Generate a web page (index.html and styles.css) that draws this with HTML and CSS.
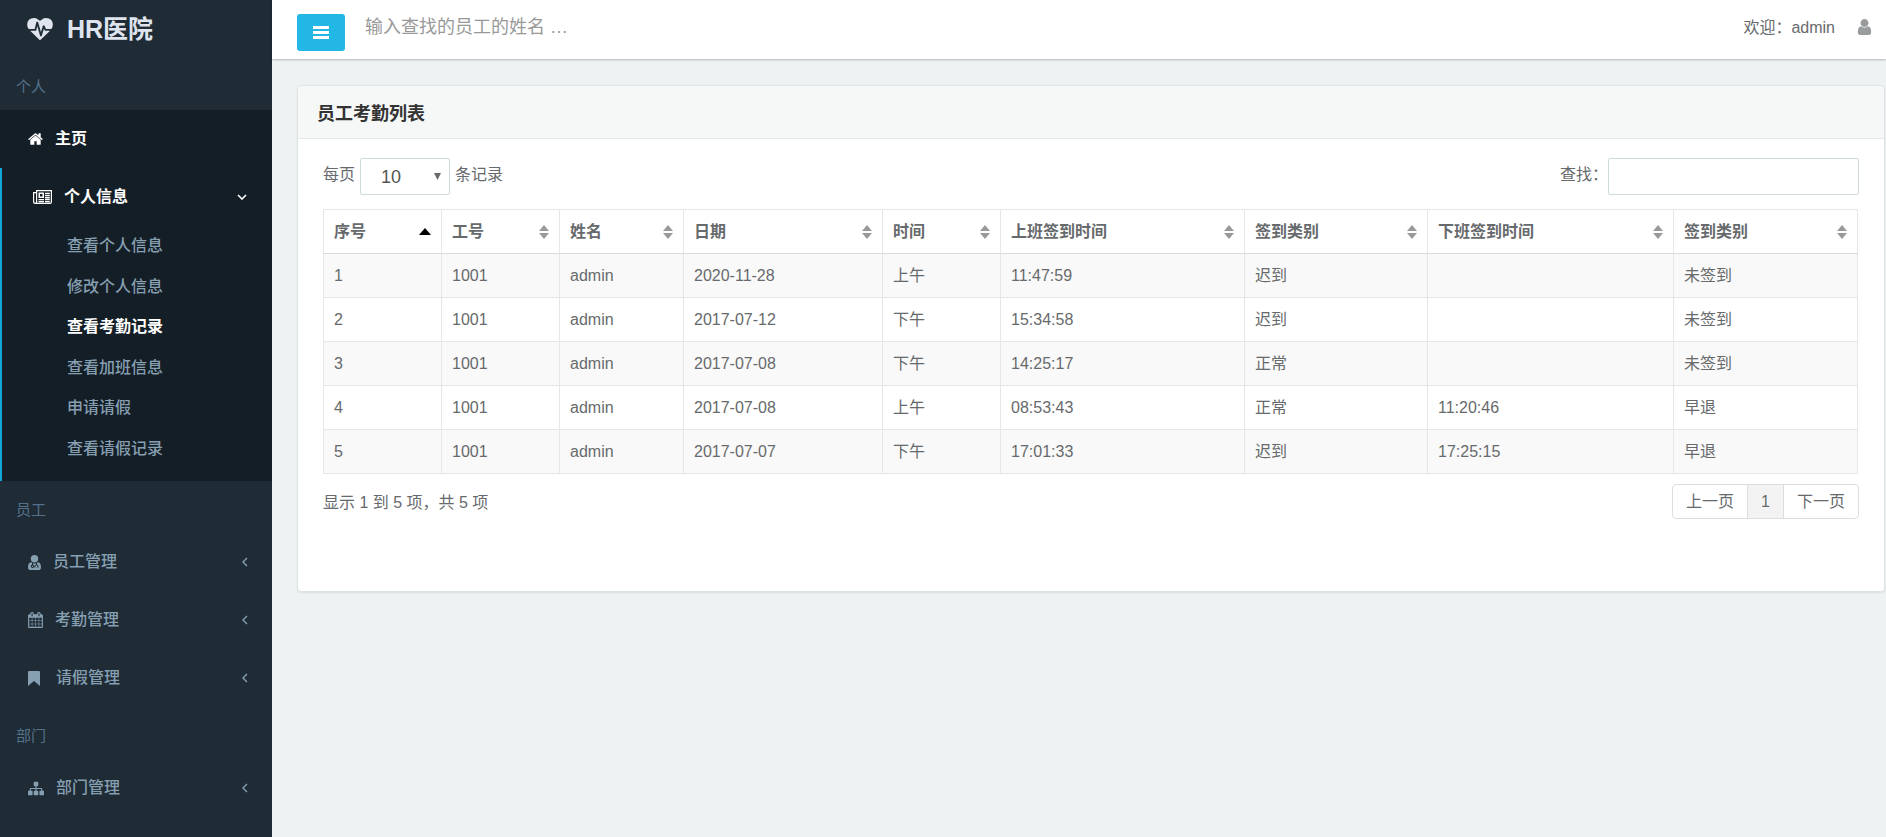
FILE: index.html
```html
<!DOCTYPE html>
<html lang="zh-CN">
<head>
<meta charset="utf-8">
<title>HR医院</title>
<link rel="stylesheet" href="styles.css">
</head>
<body>
<svg class="sprite" aria-hidden="true">
  <symbol id="sort" viewBox="0 0 10 14"><path d="M5 0l5 6H0zM0 8h10l-5 6z"/></symbol>
  <symbol id="left" viewBox="0 0 6 10"><path d="M5 1L1 5l4 4" fill="none" stroke="currentColor" stroke-width="1.4"/></symbol>
</svg>
<div class="app">
  <aside class="sidebar">
    <a class="brand" href="#">
      <svg class="brand-icon" viewBox="0 0 1792 1536"><path d="M1280 896h305q-5 6-10 10.500t-9 7.500l-3 4-623 600q-18 18-44 18t-44-18l-624-602q-5-2-21-20h369q22 0 39.500-13.500t22.500-34.500l70-281 190 667q6 20 23 33t39 13q21 0 38-13t23-33l146-485 56 112q18 35 57 35zm512-428q0 145-103 300h-369l-111-221q-8-17-25.500-27t-36.500-8q-45 5-56 46l-129 430-196-686q-6-20-23.500-33t-39.500-13-39 13.500-22 34.500l-116 464h-423q-103-155-103-300 0-220 127-344t351-124q62 0 126.500 21.500t120 58 95.500 68.500 76 68q36-36 76-68t95.500-68.500 120-58 126.500-21.500q224 0 351 124t127 344z"/></svg>
      <span>HR医院</span>
    </a>
    <nav>
      <h2 class="section">个人</h2>
      <a class="item current" href="#">
        <svg class="i15" viewBox="64 190 1664 1400"><path d="M1472 992v480q0 26-19 45t-45 19h-384v-384h-256v384h-384q-26 0-45-19t-19-45v-480q0-1 .5-3t.5-3l575-474 575 474q1 2 1 6zm223-69l-62 74q-8 9-21 11h-3q-13 0-21-7l-692-577-692 577q-12 8-24 7-13-2-21-11l-62-74q-8-10-7-23.500t11-21.500l719-599q32-26 76-26t76 26l244 204v-195q0-14 9-23t23-9h192q14 0 23 9t9 23v408l219 182q10 8 11 21.500t-7 23.500z"/></svg>
        <span>主页</span>
      </a>
      <div class="group">
        <a class="item current" href="#">
          <svg class="i19" viewBox="0 0 19 14"><path fill-rule="evenodd" d="M3 0h16v12q0 2-2 2H2q-2 0-2-2V2h3zM4.200 1.200V12q0 .5-.2.800h13q.8 0 .8-.8V1.200zM1.200 3.200V12q0 .8.900.8T3 12V3.200zM5.500 2.500h5.500v5.500H5.500zM7 4v2.500h2.500V4zM12 2.800h4.800v1.400H12zM12 4.900h4.800v1.400H12zM12 7h4.800v1.400H12zM5.500 9.100h5.500v1.200H5.500zM12 9.100h4.800v1.200H12zM5.500 11h5.500v1.200H5.500zM12 11h4.800v1.200H12z"/></svg>
          <span>个人信息</span>
          <svg class="down" viewBox="0 0 10 6"><path d="M1 1l4 4 4-4" fill="none" stroke="currentColor" stroke-width="1.600"/></svg>
        </a>
        <ul class="sub">
          <li><a href="#">查看个人信息</a></li>
          <li><a href="#">修改个人信息</a></li>
          <li><a class="active" href="#">查看考勤记录</a></li>
          <li><a href="#">查看加班信息</a></li>
          <li><a href="#">申请请假</a></li>
          <li><a href="#">查看请假记录</a></li>
        </ul>
      </div>
      <h2 class="section">员工</h2>
      <a class="item" href="#">
        <svg class="i13" viewBox="0 0 13 15"><path fill-rule="evenodd" d="M6.500 0a3.700 3.700 0 1 1 0 7.400 3.700 3.700 0 0 1 0-7.400zM3 7.200l1 .5v2.100a1.600 1.600 0 1 0 1 0V8.200q1.500.6 3 0v1.200q-1.500.3-1.500 2v1.400h1v-1.400q0-1.100 1-1.100t1 1.100v1.400h1v-1.400q0-1.700-1.500-2V7.700l1-.5q3 .6 3 5 0 2.800-2.500 2.800h-8Q0 15 0 12.200q0-4.400 3-5zM4.500 10.700a.7.7 0 1 1 0 1.400.7.7 0 0 1 0-1.400z"/></svg>
        <span>员工管理</span>
        <svg class="left"><use href="#left"/></svg>
      </a>
      <a class="item" href="#">
        <svg class="i15" viewBox="64 0 1664 1792"><path d="M192 1664h288v-288h-288v288zm352 0h320v-288h-320v288zm-352-352h288v-320h-288v320zm352 0h320v-320h-320v320zm-352-384h288v-288h-288v288zm736 736h320v-288h-320v288zm-384-736h320v-288h-320v288zm768 736h288v-288h-288v288zm-384-352h320v-320h-320v320zm-352-864v-288q0-13-9.500-22.500t-22.500-9.500h-64q-13 0-22.500 9.500t-9.500 22.500v288q0 13 9.500 22.500t22.500 9.500h64q13 0 22.500-9.500t9.500-22.500zm736 864h288v-320h-288v320zm-384-384h320v-288h-320v288zm384 0h288v-288h-288v288zm32-480v-288q0-13-9.500-22.500t-22.500-9.500h-64q-13 0-22.500 9.500t-9.500 22.500v288q0 13 9.500 22.500t22.500 9.500h64q13 0 22.500-9.500t9.500-22.500zm384-64v1280q0 52-38 90t-90 38h-1408q-52 0-90-38t-38-90v-1280q0-52 38-90t90-38h128v-96q0-66 47-113t113-47h64q66 0 113 47t47 113v96h384v-96q0-66 47-113t113-47h64q66 0 113 47t47 113v96h128q52 0 90 38t38 90z"/></svg>
        <span>考勤管理</span>
        <svg class="left"><use href="#left"/></svg>
      </a>
      <a class="item" href="#">
        <svg class="i16" viewBox="0 0 16 15"><path d="M1 0h10q1 0 1 1v14l-6-5-6 5V1q0-1 1-1z"/></svg>
        <span>请假管理</span>
        <svg class="left"><use href="#left"/></svg>
      </a>
      <h2 class="section">部门</h2>
      <a class="item" href="#">
        <svg class="i16" viewBox="0 128 1792 1536"><path d="M1792 1248v320q0 40-28 68t-68 28h-320q-40 0-68-28t-28-68v-320q0-40 28-68t68-28h96v-192h-512v192h96q40 0 68 28t28 68v320q0 40-28 68t-68 28h-320q-40 0-68-28t-28-68v-320q0-40 28-68t68-28h96v-192h-512v192h96q40 0 68 28t28 68v320q0 40-28 68t-68 28h-320q-40 0-68-28t-28-68v-320q0-40 28-68t68-28h96v-192q0-52 38-90t90-38h512v-192h-96q-40 0-68-28t-28-68v-320q0-40 28-68t68-28h320q40 0 68 28t28 68v320q0 40-28 68t-68 28h-96v192h512q52 0 90 38t38 90v192h96q40 0 68 28t28 68z"/></svg>
        <span>部门管理</span>
        <svg class="left"><use href="#left"/></svg>
      </a>
    </nav>
  </aside>

  <div class="content">
    <header class="topbar">
      <button class="toggle" type="button" aria-label="菜单"><svg viewBox="0 0 16 13"><path d="M0 0h16v3H0zM0 5h16v3H0zM0 10h16v3H0z"/></svg></button>
      <input class="top-search" type="text" aria-label="查找员工" placeholder="输入查找的员工的姓名 …">
      <span class="welcome">欢迎：admin</span>
      <a class="user" href="#" aria-label="用户"><svg viewBox="256 128 1280 1536"><path d="M1536 1399q0 109-62.500 187t-150.500 78h-854q-88 0-150.500-78t-62.500-187q0-85 8.500-160.500t31.500-152 58.500-131 94-89 134.500-34.500q131 128 313 128t313-128q76 0 134.500 34.500t94 89 58.500 131 31.500 152 8.500 160.500zm-256-887q0 159-112.500 271.500t-271.500 112.500-271.500-112.500-112.500-271.500 112.500-271.500 271.500-112.500 271.500 112.500 112.500 271.500z"/></svg></a>
    </header>
    <main>
      <section class="panel">
        <h1 class="panel-title">员工考勤列表</h1>
        <div class="panel-body">
          <div class="tools">
            <label class="length">每页
              <span class="select-wrap">
                <select><option>10</option><option>25</option><option>50</option></select>
                <svg viewBox="0 0 7 7"><path d="M0 0h7L3.500 7z"/></svg>
              </span>
              条记录</label>
            <label class="filter">查找：<input type="search"></label>
          </div>
          <table>
            <colgroup><col class="c118"><col class="c118"><col class="c124"><col class="c199"><col class="c118"><col class="c244"><col class="c183"><col class="c246"><col class="c184"></colgroup>
            <thead>
              <tr>
                <th><button type="button">序号<svg class="asc" viewBox="0 0 12 7"><path d="M6 0l6 7H0z"/></svg></button></th>
                <th><button type="button">工号<svg><use href="#sort"/></svg></button></th>
                <th><button type="button">姓名<svg><use href="#sort"/></svg></button></th>
                <th><button type="button">日期<svg><use href="#sort"/></svg></button></th>
                <th><button type="button">时间<svg><use href="#sort"/></svg></button></th>
                <th><button type="button">上班签到时间<svg><use href="#sort"/></svg></button></th>
                <th><button type="button">签到类别<svg><use href="#sort"/></svg></button></th>
                <th><button type="button">下班签到时间<svg><use href="#sort"/></svg></button></th>
                <th><button type="button">签到类别<svg><use href="#sort"/></svg></button></th>
              </tr>
            </thead>
            <tbody>
              <tr><td>1</td><td>1001</td><td>admin</td><td>2020-11-28</td><td>上午</td><td>11:47:59</td><td>迟到</td><td></td><td>未签到</td></tr>
              <tr><td>2</td><td>1001</td><td>admin</td><td>2017-07-12</td><td>下午</td><td>15:34:58</td><td>迟到</td><td></td><td>未签到</td></tr>
              <tr><td>3</td><td>1001</td><td>admin</td><td>2017-07-08</td><td>下午</td><td>14:25:17</td><td>正常</td><td></td><td>未签到</td></tr>
              <tr><td>4</td><td>1001</td><td>admin</td><td>2017-07-08</td><td>上午</td><td>08:53:43</td><td>正常</td><td>11:20:46</td><td>早退</td></tr>
              <tr><td>5</td><td>1001</td><td>admin</td><td>2017-07-07</td><td>下午</td><td>17:01:33</td><td>迟到</td><td>17:25:15</td><td>早退</td></tr>
            </tbody>
          </table>
          <div class="foot">
            <span>显示 1 到 5 项，共 5 项</span>
            <nav class="pager"><a href="#">上一页</a><a class="on" href="#">1</a><a href="#">下一页</a></nav>
          </div>
        </div>
      </section>
    </main>
  </div>
</div>
</body>
</html>
```
FILE: styles.css
```css
* { box-sizing: border-box; }

body {
  margin: 0;
  background: #eef2f3;
  color: #676a6c;
  font: 16px/24px "Liberation Sans", "Noto Sans CJK SC", sans-serif;
}

a { color: inherit; text-decoration: none; }
svg { fill: currentColor; flex: none; }
button, input, select { font: inherit; color: inherit; }
.sprite { display: none; }

.app { display: flex; min-height: 100vh; }

/* Sidebar */
.sidebar {
  flex: none;
  width: 272px;
  background: #1f2b35;
  color: #869fb1;
}
.brand {
  display: flex;
  align-items: center;
  gap: 14px;
  height: 58px;
  padding-left: 27px;
  color: #dfe4ee;
  font-size: 25px;
  font-weight: 700;
}
.brand-icon { width: 26px; height: 22px; }
.section {
  height: 52px;
  margin: 0;
  padding-left: 16px;
  color: #54728c;
  font-size: 15px;
  font-weight: 400;
  line-height: 58px;
}
.item {
  display: flex;
  align-items: center;
  height: 58px;
  padding: 0 24px 0 28px;
  font-weight: 500;
}
.item span { flex: 1; margin-left: 12px; }
.item.current { background: #141e26; color: #fff; font-weight: 700; }
.i13 { width: 13px; height: 15px; }
.i15 { width: 15px; height: 16px; }
.i16 { width: 16px; height: 15px; }
.i19 { width: 19px; height: 14px; }
.left { width: 6px; height: 10px; }
.down { width: 10px; height: 6px; }
.group {
  border-left: 2px solid #12a5da;
  background: #141e26;
}
.group .item { padding: 0 25px 0 31px; }
.sub {
  display: grid;
  grid-auto-rows: 1fr;
  align-items: center;
  height: 255px;
  margin: 0;
  padding: 0 0 12px 65px;
  list-style: none;
}
.sub a { display: block; font-weight: 500; }
.sub .active { color: #fff; font-weight: 700; }

/* Top bar */
.content { flex: 1; min-width: 0; }
.topbar {
  display: flex;
  align-items: center;
  height: 59px;
  padding: 0 14px 0 25px;
  background: #fff;
  box-shadow: 0 1px 2px rgba(0, 0, 0, 0.25);
}
.toggle {
  display: flex;
  align-items: center;
  justify-content: center;
  width: 48px;
  height: 37px;
  margin-top: 6px;
  border: 0;
  border-radius: 3px;
  background: #23b7e5;
  color: #fff;
}
.toggle svg { width: 16px; height: 13px; }
.top-search {
  flex: 1;
  height: 54px;
  margin-bottom: 5px;
  padding: 0 20px;
  border: 0;
  outline: 0;
  background: none;
  font-size: 18px;
}
.top-search::placeholder { color: #999; }
.welcome { margin-bottom: 3px; }
.user {
  display: flex;
  margin: 0 0 5px 22px;
  color: #999c9e;
}
.user svg { width: 15px; height: 16px; }

/* Panel */
main { padding: 26px 1px 0 25px; }
.panel {
  border: 1px solid #dee5e7;
  border-radius: 4px;
  background: #fff;
  box-shadow: 0 1px 2px rgba(0, 0, 0, 0.08);
}
.panel-title {
  margin: 0;
  padding: 16px 19px 11px;
  border-bottom: 1px solid #e4eaec;
  border-radius: 4px 4px 0 0;
  background: #f6f8f8;
  color: #333;
  font-size: 18px;
  font-weight: 700;
  line-height: 25px;
}
.panel-body { padding: 19px 25px 70px; }
.tools { display: flex; justify-content: space-between; }
.tools label { display: flex; line-height: 34px; }
.length { gap: 5px; }
.select-wrap { position: relative; width: 90px; }
.select-wrap svg {
  position: absolute;
  top: 15px;
  right: 9px;
  width: 7px;
  height: 7px;
  pointer-events: none;
}
.tools select, .tools input {
  display: block;
  height: 37px;
  border: 1px solid #cfdadd;
  border-radius: 2px;
  background: #fff;
}
.tools select {
  width: 100%;
  padding: 0 20px;
  appearance: none;
  color: #555;
  font-size: 18px;
}
.tools input { width: 251px; padding: 0 10px; }

table {
  width: calc(100% - 2px);
  margin-top: 14px;
  border-collapse: collapse;
  table-layout: fixed;
}
.c118 { width: 118px; }
.c124 { width: 124px; }
.c183 { width: 183px; }
.c184 { width: 184px; }
.c199 { width: 199px; }
.c244 { width: 244px; }
.c246 { width: 246px; }
th, td {
  height: 44px;
  padding: 0 10px;
  border: 1px solid #e4e6e7;
  text-align: left;
}
th { border-bottom-color: #d8dbdc; }
th button {
  display: flex;
  align-items: center;
  justify-content: space-between;
  width: 100%;
  padding: 0;
  border: 0;
  background: none;
  font-weight: 700;
}
th svg { width: 10px; height: 14px; color: #999; }
th .asc { width: 12px; height: 7px; color: #000; }
tbody tr:nth-child(odd) { background: #f9f9f9; }

.foot {
  display: flex;
  justify-content: space-between;
  padding-top: 10px;
  line-height: 37px;
}
.pager { display: flex; }
.pager a {
  height: 35px;
  padding: 0 13px;
  border: 1px solid #ddd;
  line-height: 33px;
}
.pager a + a { margin-left: -1px; }
.pager a:first-child { border-radius: 4px 0 0 4px; }
.pager a:last-child { border-radius: 0 4px 4px 0; }
.pager .on { background: #f3f3f3; }
```
